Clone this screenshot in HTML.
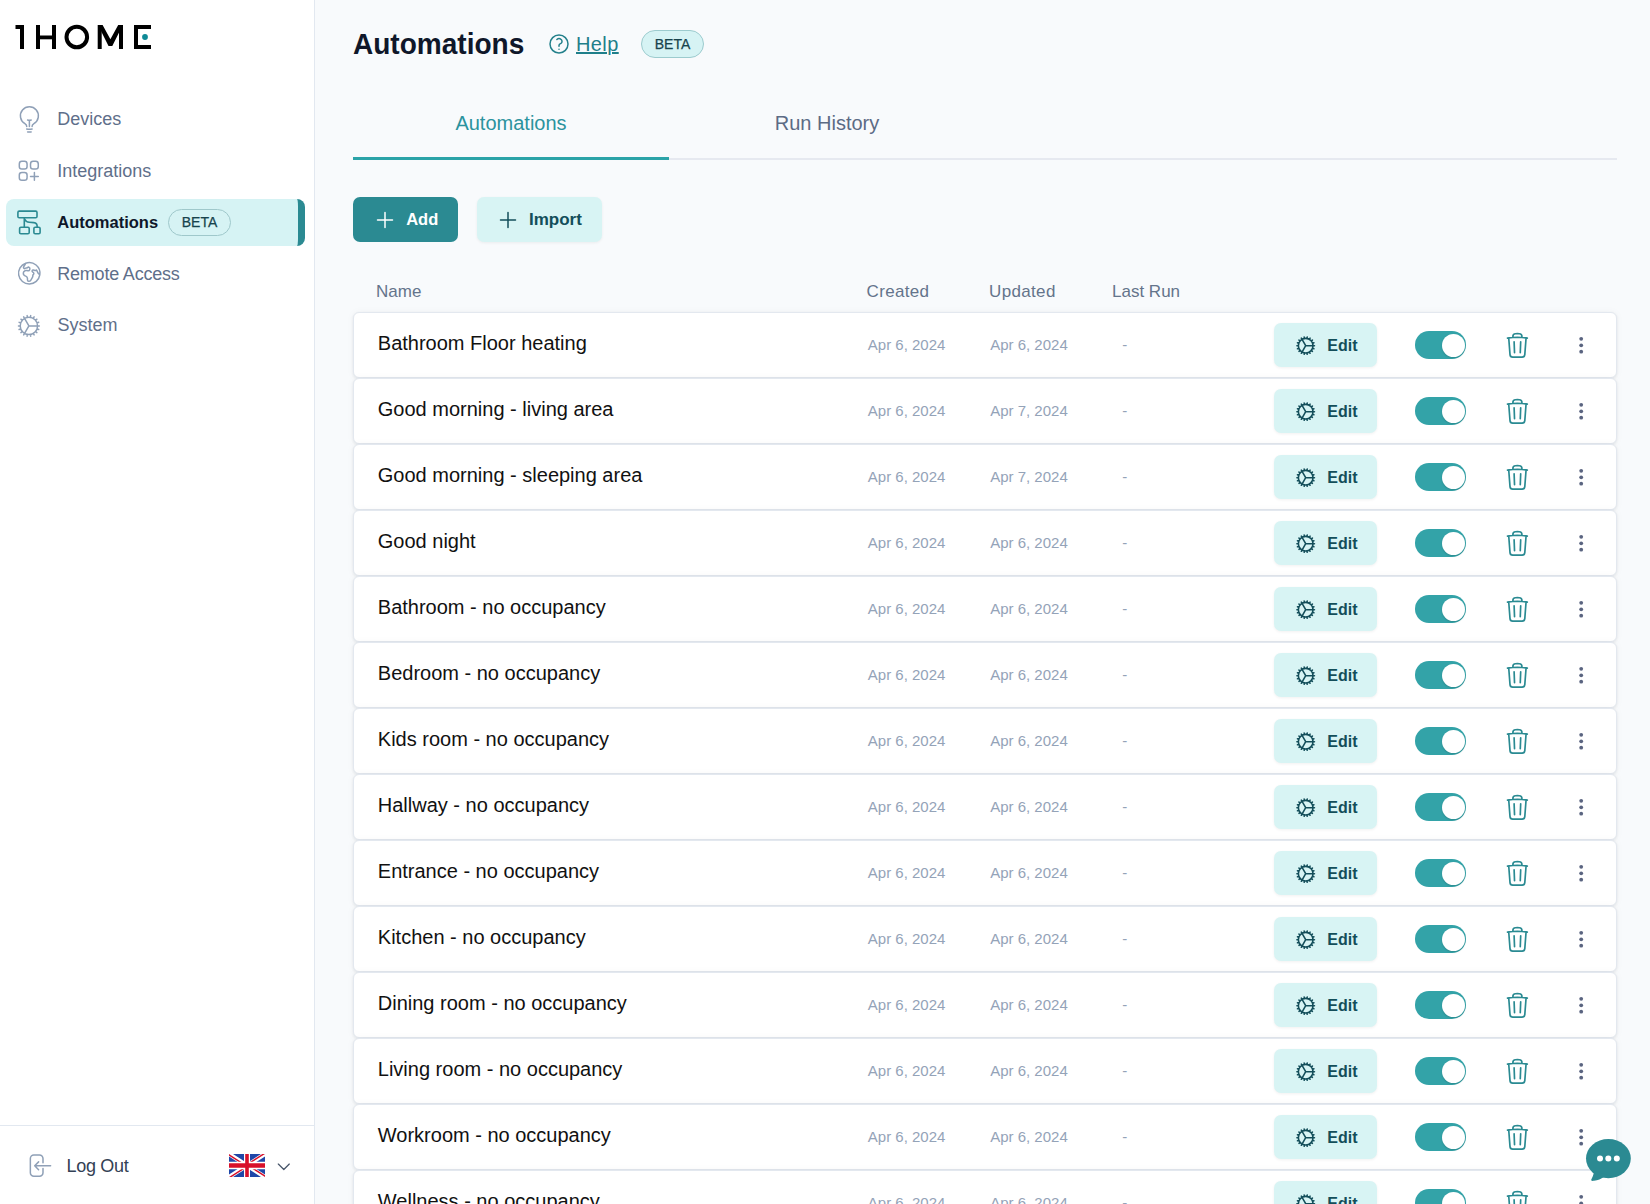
<!DOCTYPE html>
<html><head><meta charset="utf-8"><title>Automations</title>
<style>
html,body{margin:0;padding:0;width:1650px;height:1204px;overflow:hidden;background:#f8fafc;font-family:"Liberation Sans", sans-serif;}
.t{position:absolute;white-space:nowrap;}
.i{position:absolute;overflow:visible;}
.b{position:absolute;box-sizing:border-box;}
</style></head><body>
<div class="b" style="left:0;top:0;width:315px;height:1204px;background:#fff;border-right:1px solid #e2e8f0"></div>
<svg class="i" style="left:0;top:0;width:200px;height:70px" viewBox="0 0 200 70">
<g fill="#000">
<path d="M15.5 25h8.5v24h-4v-20h-4.5z"/>
<rect x="36" y="25" width="4" height="24"/><rect x="52" y="25" width="4" height="24"/><rect x="36" y="35.5" width="20" height="3.8"/>
<rect x="97.7" y="25" width="4" height="24"/><rect x="119" y="25" width="4" height="24"/>
<path d="M98 25h4.6l7.8 14.2 7.8-14.2h4.6l-10.5 20.9h-3.8z"/>
<path d="M134 25h17v4h-13v16h13v4h-17z"/>
</g>
<circle cx="76.8" cy="37" r="10.3" fill="none" stroke="#000" stroke-width="4"/>
<circle cx="145" cy="37" r="2.9" fill="#0e8a96"/>
</svg>
<svg class="i" style="left:14.75px;top:104.80px;width:28.80px;height:28.80px;" viewBox="0 0 24 24" fill="none" stroke="#8fa0b7" stroke-width="1.25" stroke-linecap="round" stroke-linejoin="round"><path d="M12 18v-5.25m0 0a6.01 6.01 0 0 0 1.5-.189m-1.5.189a6.01 6.01 0 0 1-1.5-.189m3.75 7.478a12.06 12.06 0 0 1-4.5 0m3.75 2.383a14.406 14.406 0 0 1-3 0M14.25 18v-.192c0-.983.658-1.823 1.508-2.316a7.5 7.5 0 1 0-7.517 0c.85.493 1.509 1.333 1.509 2.316V18"/></svg>
<svg class="i" style="left:15.10px;top:156.50px;width:27.60px;height:27.60px;" viewBox="0 0 24 24" fill="none" stroke="#8fa0b7" stroke-width="1.3" stroke-linecap="round" stroke-linejoin="round"><path d="M13.5 16.875h3.375m0 0h3.375m-3.375 0V13.5m0 3.375v3.375M6 10.5h2.25a2.25 2.25 0 0 0 2.25-2.25V6a2.25 2.25 0 0 0-2.25-2.25H6A2.25 2.25 0 0 0 3.75 6v2.25A2.25 2.25 0 0 0 6 10.5Zm0 9.75h2.25A2.25 2.25 0 0 0 10.5 18v-2.25a2.25 2.25 0 0 0-2.25-2.25H6a2.25 2.25 0 0 0-2.25 2.25V18A2.25 2.25 0 0 0 6 20.25Zm9.75-9.75H18a2.25 2.25 0 0 0 2.25-2.25V6A2.25 2.25 0 0 0 18 3.75h-2.25A2.25 2.25 0 0 0 13.5 6v2.25a2.25 2.25 0 0 0 2.25 2.25Z"/></svg>
<div class="b" style="left:6px;top:199px;width:299px;height:47px;background:#d6f3f4;border-radius:8px;border-right:7px solid #2b8a92"></div>
<svg class="i" style="left:0;top:190px;width:60px;height:60px" viewBox="0 190 60 60" fill="none" stroke="#2b8a92" stroke-width="1.6" stroke-linecap="round" stroke-linejoin="round">
<rect x="17.9" y="211.1" width="19.1" height="6.6" rx="1.3"/>
<rect x="19.6" y="227.3" width="9.6" height="6.5" rx="1.3"/>
<rect x="33.9" y="227.3" width="6.2" height="6.5" rx="1.3"/>
<path d="M24.3 218v9.2M24.6 219c1 2.2 2.2 3.1 4.6 3.3l4.6.3c2.3.2 3.6 1.5 3.4 4.7"/>
</svg>
<svg class="i" style="left:14.90px;top:259.20px;width:28.50px;height:28.50px;" viewBox="0 0 24 24" fill="none" stroke="#8fa0b7" stroke-width="1.25" stroke-linecap="round" stroke-linejoin="round"><path d="m20.893 13.393-1.135-1.135a2.252 2.252 0 0 1-.421-.585l-1.08-2.16a.414.414 0 0 0-.663-.107.827.827 0 0 1-.812.21l-1.273-.363a.89.89 0 0 0-.738 1.595l.587.39c.59.395.674 1.23.172 1.732l-.2.2c-.212.212-.33.498-.33.796v.41c0 .409-.11.809-.32 1.158l-1.315 2.191a2.11 2.11 0 0 1-1.81 1.025 1.055 1.055 0 0 1-1.055-1.055v-1.172c0-.92-.56-1.747-1.414-2.089l-.655-.261a2.25 2.25 0 0 1-1.383-2.46l.007-.042a2.25 2.25 0 0 1 .29-.787l.09-.15a2.25 2.25 0 0 1 2.37-1.048l1.178.236a1.125 1.125 0 0 0 1.302-.795l.208-.73a1.125 1.125 0 0 0-.578-1.315l-.665-.332-.091.091a2.25 2.25 0 0 1-1.591.659h-.18c-.249 0-.487.1-.662.274a.931.931 0 0 1-1.458-1.137l1.411-2.353a2.25 2.25 0 0 0 .286-.76m11.928 9.869A9 9 0 0 0 8.965 3.525m11.928 9.868A9 9 0 1 1 8.965 3.525"/></svg>
<svg class="i" style="left:15.00px;top:311.80px;width:27.80px;height:27.80px;" viewBox="0 0 24 24" fill="none" stroke="#8fa0b7" stroke-width="1.3" stroke-linecap="round" stroke-linejoin="round"><path d="M4.5 12a7.5 7.5 0 0 0 15 0m-15 0a7.5 7.5 0 1 1 15 0m-15 0H3m16.5 0H21m-1.5 0H12m-8.457 3.077 1.41-.513m14.095-5.13 1.41-.513M5.106 17.785l1.149-.964m11.49-9.642 1.149-.964M7.501 19.795l.75-1.3m7.5-12.99.75-1.3m-6.063 16.658.26-1.477m2.605-14.772.26-1.477m0 17.726-.26-1.477M10.698 4.614l-.26-1.477M16.5 19.794l-.75-1.299M7.5 4.205 12 12m6.894 5.785-1.149-.964M6.256 7.178l-1.15-.964m15.352 8.864-1.41-.513M4.954 9.435l-1.41-.514M12.002 12l-3.75 6.495"/></svg>
<div class="t" style="left:57.2px;top:109.5px;font-size:18px;line-height:18px;font-weight:400;color:#5f6f8a;">Devices</div>
<div class="t" style="left:57.2px;top:161.6px;font-size:18px;line-height:18px;font-weight:400;color:#5f6f8a;">Integrations</div>
<div class="t" style="left:57.3px;top:213.8px;font-size:16.5px;line-height:16.5px;font-weight:700;color:#0f172a;">Automations</div>
<div class="b" style="left:168px;top:209px;width:63px;height:27px;border:1.5px solid #9fc8cb;border-radius:14px"></div>
<div class="t" style="left:168.0px;width:63px;text-align:center;top:215.3px;font-size:14px;line-height:14px;font-weight:400;color:#17434d;-webkit-text-stroke:0.25px #17434d;">BETA</div>
<div class="t" style="left:57.2px;top:264.5px;font-size:18px;line-height:18px;font-weight:400;color:#5f6f8a;letter-spacing:-0.2px;">Remote Access</div>
<div class="t" style="left:57.5px;top:316.3px;font-size:18px;line-height:18px;font-weight:400;color:#5f6f8a;">System</div>
<div class="b" style="left:0;top:1125px;width:314px;height:1px;background:#e2e8f0"></div>
<svg class="i" style="left:0;top:1140px;width:60px;height:50px" viewBox="0 1140 60 50" fill="none" stroke="#8fa0b7" stroke-width="1.5" stroke-linecap="round" stroke-linejoin="round">
<path d="M43 1162.8V1158.5A3.5 3.5 0 0 0 39.5 1155H33.85A3.5 3.5 0 0 0 30.35 1158.5V1172.8A3.5 3.5 0 0 0 33.85 1176.3H39.5A3.5 3.5 0 0 0 43 1172.8V1168.6"/>
<path d="M50.6 1165.8H35M38.6 1161.9L34.7 1165.8L38.6 1169.8"/>
</svg>
<div class="t" style="left:66.5px;top:1156.8px;font-size:18px;line-height:18px;font-weight:400;color:#334155;letter-spacing:-0.3px;">Log Out</div>
<svg class="i" style="left:229px;top:1154px;width:36px;height:23px" viewBox="0 0 60 30" preserveAspectRatio="none">
<clipPath id="fc"><path d="M0,0 v30 h60 v-30 z"/></clipPath>
<clipPath id="ft"><path d="M30,15 h30 v15 z v15 h-30 z h-30 v-15 z v-15 h30 z"/></clipPath>
<g clip-path="url(#fc)">
<path d="M0,0 v30 h60 v-30 z" fill="#1f47a8"/>
<path d="M0,0 L60,30 M60,0 L0,30" stroke="#fff" stroke-width="6"/>
<path d="M0,0 L60,30 M60,0 L0,30" clip-path="url(#ft)" stroke="#d8102a" stroke-width="4"/>
<path d="M30,0 v30 M0,15 h60" stroke="#fff" stroke-width="10"/>
<path d="M30,0 v30 M0,15 h60" stroke="#d8102a" stroke-width="6"/>
</g></svg>
<svg class="i" style="left:275.20px;top:1158.00px;width:17.60px;height:17.60px;" viewBox="0 0 24 24" fill="none" stroke="#475569" stroke-width="1.7" stroke-linecap="round" stroke-linejoin="round"><path d="m19.5 8.25-7.5 7.5-7.5-7.5"/></svg>
<div class="t" style="left:352.6px;top:29.2px;font-size:29.7px;line-height:29.7px;font-weight:700;color:#0f172a;transform:scaleX(0.944);transform-origin:0 0;">Automations</div>
<svg class="i" style="left:547.20px;top:31.60px;width:24.00px;height:24.00px;" viewBox="0 0 24 24" fill="none" stroke="#23808b" stroke-width="1.5" stroke-linecap="round" stroke-linejoin="round"><path d="M9.879 7.519c1.171-1.025 3.071-1.025 4.242 0 1.172 1.025 1.172 2.687 0 3.712-.203.179-.43.326-.67.442-.745.361-1.45.999-1.45 1.827v.75M21 12a9 9 0 1 1-18 0 9 9 0 0 1 18 0Zm-9 5.25h.008v.008H12v-.008Z"/></svg>
<div class="t" style="left:576.0px;top:33.9px;font-size:20px;line-height:20px;font-weight:400;color:#1f7f8a;letter-spacing:0.4px;text-decoration:underline;text-decoration-thickness:2px;text-underline-offset:1px;">Help</div>
<div class="b" style="left:641px;top:30px;width:63px;height:28px;background:#d6f3f4;border:1.5px solid #9ccbce;border-radius:14px"></div>
<div class="t" style="left:641.0px;width:63px;text-align:center;top:37.0px;font-size:14px;line-height:14px;font-weight:400;color:#17434d;-webkit-text-stroke:0.25px #17434d;">BETA</div>
<div class="t" style="left:353.0px;width:316px;text-align:center;top:113.2px;font-size:20px;line-height:20px;font-weight:400;color:#2b939e;">Automations</div>
<div class="t" style="left:669.0px;width:316px;text-align:center;top:113.2px;font-size:20px;line-height:20px;font-weight:400;color:#5c6b85;">Run History</div>
<div class="b" style="left:669px;top:158px;width:948px;height:2px;background:#e6e9f0"></div>
<div class="b" style="left:353px;top:157px;width:316px;height:3px;background:#2ba3a8"></div>
<div class="b" style="left:353px;top:197px;width:105px;height:45px;background:#2b8a92;border-radius:7px"></div>
<svg class="i" style="left:372.60px;top:207.80px;width:24.00px;height:24.00px;" viewBox="0 0 24 24" fill="none" stroke="#ffffff" stroke-width="1.5" stroke-linecap="round" stroke-linejoin="round"><path d="M12 4.5v15m7.5-7.5h-15"/></svg>
<div class="t" style="left:406.2px;top:211.1px;font-size:16.5px;line-height:16.5px;font-weight:700;color:#ffffff;">Add</div>
<div class="b" style="left:477px;top:197px;width:125px;height:45px;background:#d8f4f4;border-radius:7px;box-shadow:0 1px 3px rgba(0,0,0,0.06)"></div>
<svg class="i" style="left:496.25px;top:207.80px;width:24.00px;height:24.00px;" viewBox="0 0 24 24" fill="none" stroke="#134e5a" stroke-width="1.5" stroke-linecap="round" stroke-linejoin="round"><path d="M12 4.5v15m7.5-7.5h-15"/></svg>
<div class="t" style="left:529.0px;top:210.7px;font-size:17px;line-height:17px;font-weight:700;color:#134e5a;">Import</div>
<div class="t" style="left:376.0px;top:282.5px;font-size:17px;line-height:17px;font-weight:400;color:#64748b;">Name</div>
<div class="t" style="left:866.5px;top:283.0px;font-size:17px;line-height:17px;font-weight:400;color:#64748b;letter-spacing:0.35px;">Created</div>
<div class="t" style="left:989.0px;top:283.0px;font-size:17px;line-height:17px;font-weight:400;color:#64748b;letter-spacing:0.35px;">Updated</div>
<div class="t" style="left:1112.0px;top:283.0px;font-size:17px;line-height:17px;font-weight:400;color:#64748b;">Last Run</div>
<div class="b" style="left:353px;top:312px;width:1264px;height:66px;background:#fff;border:1px solid #e3e8ef;border-radius:6px;box-shadow:0 1px 3px rgba(15,23,42,0.08),0 0 8px rgba(15,23,42,0.035)"></div>
<div class="t" style="left:377.8px;top:332.5px;font-size:20px;line-height:20px;font-weight:400;color:#111111;">Bathroom Floor heating</div>
<div class="t" style="left:867.8px;top:336.8px;font-size:15px;line-height:15px;font-weight:400;color:#94a3b8;">Apr 6, 2024</div>
<div class="t" style="left:990.2px;top:336.8px;font-size:15px;line-height:15px;font-weight:400;color:#94a3b8;">Apr 6, 2024</div>
<div class="t" style="left:1122.3px;top:336.8px;font-size:15px;line-height:15px;font-weight:400;color:#94a3b8;">-</div>
<div class="b" style="left:1274px;top:323px;width:103px;height:44px;background:#d8f4f4;border-radius:7px;box-shadow:0 1px 3px rgba(0,0,0,0.06)"></div>
<svg class="i" style="left:1294.30px;top:333.50px;width:23.40px;height:23.40px;" viewBox="0 0 24 24" fill="none" stroke="#134e5a" stroke-width="1.6" stroke-linecap="round" stroke-linejoin="round"><path d="M4.5 12a7.5 7.5 0 0 0 15 0m-15 0a7.5 7.5 0 1 1 15 0m-15 0H3m16.5 0H21m-1.5 0H12m-8.457 3.077 1.41-.513m14.095-5.13 1.41-.513M5.106 17.785l1.149-.964m11.49-9.642 1.149-.964M7.501 19.795l.75-1.3m7.5-12.99.75-1.3m-6.063 16.658.26-1.477m2.605-14.772.26-1.477m0 17.726-.26-1.477M10.698 4.614l-.26-1.477M16.5 19.794l-.75-1.299M7.5 4.205 12 12m6.894 5.785-1.149-.964M6.256 7.178l-1.15-.964m15.352 8.864-1.41-.513M4.954 9.435l-1.41-.514M12.002 12l-3.75 6.495"/></svg>
<div class="t" style="left:1327.3px;top:337.9px;font-size:16px;line-height:16px;font-weight:700;color:#134e5a;">Edit</div>
<div class="b" style="left:1415px;top:331px;width:51px;height:28px;background:#33a3a8;border-radius:14px"></div>
<div class="b" style="left:1441.5px;top:334px;width:23px;height:23px;background:#fff;border-radius:50%;box-shadow:0 1px 2px rgba(0,0,0,0.15)"></div>
<svg class="i" style="left:1503.30px;top:331.00px;width:28.80px;height:28.80px;" viewBox="0 0 24 24" fill="none" stroke="#2a8a92" stroke-width="1.4" stroke-linecap="round" stroke-linejoin="round"><path d="m14.74 9-.346 9m-4.788 0L9.26 9m9.968-3.21c.342.052.682.107 1.022.166m-1.022-.165L18.16 19.673a2.25 2.25 0 0 1-2.244 2.077H8.084a2.25 2.25 0 0 1-2.244-2.077L4.772 5.79m14.456 0a48.108 48.108 0 0 0-3.478-.397m-12 .562c.34-.059.68-.114 1.022-.165m0 0a48.11 48.11 0 0 1 3.478-.397m7.5 0v-.916c0-1.18-.91-2.164-2.09-2.201a51.964 51.964 0 0 0-3.32 0c-1.18.037-2.09 1.022-2.09 2.201v.916m7.5 0a48.667 48.667 0 0 0-7.5 0"/></svg>
<svg class="i" style="left:1570px;top:312px;width:24px;height:66px" viewBox="1570 0 24 66"><g fill="#5a6480"><circle cx="1581.2" cy="26.85" r="1.9"/><circle cx="1581.2" cy="33.3" r="1.9"/><circle cx="1581.2" cy="39.7" r="1.9"/></g></svg>
<div class="b" style="left:353px;top:378px;width:1264px;height:66px;background:#fff;border:1px solid #e3e8ef;border-radius:6px;box-shadow:0 1px 3px rgba(15,23,42,0.08),0 0 8px rgba(15,23,42,0.035)"></div>
<div class="t" style="left:377.8px;top:398.5px;font-size:20px;line-height:20px;font-weight:400;color:#111111;">Good morning - living area</div>
<div class="t" style="left:867.8px;top:402.8px;font-size:15px;line-height:15px;font-weight:400;color:#94a3b8;">Apr 6, 2024</div>
<div class="t" style="left:990.2px;top:402.8px;font-size:15px;line-height:15px;font-weight:400;color:#94a3b8;">Apr 7, 2024</div>
<div class="t" style="left:1122.3px;top:402.8px;font-size:15px;line-height:15px;font-weight:400;color:#94a3b8;">-</div>
<div class="b" style="left:1274px;top:389px;width:103px;height:44px;background:#d8f4f4;border-radius:7px;box-shadow:0 1px 3px rgba(0,0,0,0.06)"></div>
<svg class="i" style="left:1294.30px;top:399.50px;width:23.40px;height:23.40px;" viewBox="0 0 24 24" fill="none" stroke="#134e5a" stroke-width="1.6" stroke-linecap="round" stroke-linejoin="round"><path d="M4.5 12a7.5 7.5 0 0 0 15 0m-15 0a7.5 7.5 0 1 1 15 0m-15 0H3m16.5 0H21m-1.5 0H12m-8.457 3.077 1.41-.513m14.095-5.13 1.41-.513M5.106 17.785l1.149-.964m11.49-9.642 1.149-.964M7.501 19.795l.75-1.3m7.5-12.99.75-1.3m-6.063 16.658.26-1.477m2.605-14.772.26-1.477m0 17.726-.26-1.477M10.698 4.614l-.26-1.477M16.5 19.794l-.75-1.299M7.5 4.205 12 12m6.894 5.785-1.149-.964M6.256 7.178l-1.15-.964m15.352 8.864-1.41-.513M4.954 9.435l-1.41-.514M12.002 12l-3.75 6.495"/></svg>
<div class="t" style="left:1327.3px;top:403.9px;font-size:16px;line-height:16px;font-weight:700;color:#134e5a;">Edit</div>
<div class="b" style="left:1415px;top:397px;width:51px;height:28px;background:#33a3a8;border-radius:14px"></div>
<div class="b" style="left:1441.5px;top:400px;width:23px;height:23px;background:#fff;border-radius:50%;box-shadow:0 1px 2px rgba(0,0,0,0.15)"></div>
<svg class="i" style="left:1503.30px;top:397.00px;width:28.80px;height:28.80px;" viewBox="0 0 24 24" fill="none" stroke="#2a8a92" stroke-width="1.4" stroke-linecap="round" stroke-linejoin="round"><path d="m14.74 9-.346 9m-4.788 0L9.26 9m9.968-3.21c.342.052.682.107 1.022.166m-1.022-.165L18.16 19.673a2.25 2.25 0 0 1-2.244 2.077H8.084a2.25 2.25 0 0 1-2.244-2.077L4.772 5.79m14.456 0a48.108 48.108 0 0 0-3.478-.397m-12 .562c.34-.059.68-.114 1.022-.165m0 0a48.11 48.11 0 0 1 3.478-.397m7.5 0v-.916c0-1.18-.91-2.164-2.09-2.201a51.964 51.964 0 0 0-3.32 0c-1.18.037-2.09 1.022-2.09 2.201v.916m7.5 0a48.667 48.667 0 0 0-7.5 0"/></svg>
<svg class="i" style="left:1570px;top:378px;width:24px;height:66px" viewBox="1570 0 24 66"><g fill="#5a6480"><circle cx="1581.2" cy="26.85" r="1.9"/><circle cx="1581.2" cy="33.3" r="1.9"/><circle cx="1581.2" cy="39.7" r="1.9"/></g></svg>
<div class="b" style="left:353px;top:444px;width:1264px;height:66px;background:#fff;border:1px solid #e3e8ef;border-radius:6px;box-shadow:0 1px 3px rgba(15,23,42,0.08),0 0 8px rgba(15,23,42,0.035)"></div>
<div class="t" style="left:377.8px;top:464.5px;font-size:20px;line-height:20px;font-weight:400;color:#111111;">Good morning - sleeping area</div>
<div class="t" style="left:867.8px;top:468.8px;font-size:15px;line-height:15px;font-weight:400;color:#94a3b8;">Apr 6, 2024</div>
<div class="t" style="left:990.2px;top:468.8px;font-size:15px;line-height:15px;font-weight:400;color:#94a3b8;">Apr 7, 2024</div>
<div class="t" style="left:1122.3px;top:468.8px;font-size:15px;line-height:15px;font-weight:400;color:#94a3b8;">-</div>
<div class="b" style="left:1274px;top:455px;width:103px;height:44px;background:#d8f4f4;border-radius:7px;box-shadow:0 1px 3px rgba(0,0,0,0.06)"></div>
<svg class="i" style="left:1294.30px;top:465.50px;width:23.40px;height:23.40px;" viewBox="0 0 24 24" fill="none" stroke="#134e5a" stroke-width="1.6" stroke-linecap="round" stroke-linejoin="round"><path d="M4.5 12a7.5 7.5 0 0 0 15 0m-15 0a7.5 7.5 0 1 1 15 0m-15 0H3m16.5 0H21m-1.5 0H12m-8.457 3.077 1.41-.513m14.095-5.13 1.41-.513M5.106 17.785l1.149-.964m11.49-9.642 1.149-.964M7.501 19.795l.75-1.3m7.5-12.99.75-1.3m-6.063 16.658.26-1.477m2.605-14.772.26-1.477m0 17.726-.26-1.477M10.698 4.614l-.26-1.477M16.5 19.794l-.75-1.299M7.5 4.205 12 12m6.894 5.785-1.149-.964M6.256 7.178l-1.15-.964m15.352 8.864-1.41-.513M4.954 9.435l-1.41-.514M12.002 12l-3.75 6.495"/></svg>
<div class="t" style="left:1327.3px;top:469.9px;font-size:16px;line-height:16px;font-weight:700;color:#134e5a;">Edit</div>
<div class="b" style="left:1415px;top:463px;width:51px;height:28px;background:#33a3a8;border-radius:14px"></div>
<div class="b" style="left:1441.5px;top:466px;width:23px;height:23px;background:#fff;border-radius:50%;box-shadow:0 1px 2px rgba(0,0,0,0.15)"></div>
<svg class="i" style="left:1503.30px;top:463.00px;width:28.80px;height:28.80px;" viewBox="0 0 24 24" fill="none" stroke="#2a8a92" stroke-width="1.4" stroke-linecap="round" stroke-linejoin="round"><path d="m14.74 9-.346 9m-4.788 0L9.26 9m9.968-3.21c.342.052.682.107 1.022.166m-1.022-.165L18.16 19.673a2.25 2.25 0 0 1-2.244 2.077H8.084a2.25 2.25 0 0 1-2.244-2.077L4.772 5.79m14.456 0a48.108 48.108 0 0 0-3.478-.397m-12 .562c.34-.059.68-.114 1.022-.165m0 0a48.11 48.11 0 0 1 3.478-.397m7.5 0v-.916c0-1.18-.91-2.164-2.09-2.201a51.964 51.964 0 0 0-3.32 0c-1.18.037-2.09 1.022-2.09 2.201v.916m7.5 0a48.667 48.667 0 0 0-7.5 0"/></svg>
<svg class="i" style="left:1570px;top:444px;width:24px;height:66px" viewBox="1570 0 24 66"><g fill="#5a6480"><circle cx="1581.2" cy="26.85" r="1.9"/><circle cx="1581.2" cy="33.3" r="1.9"/><circle cx="1581.2" cy="39.7" r="1.9"/></g></svg>
<div class="b" style="left:353px;top:510px;width:1264px;height:66px;background:#fff;border:1px solid #e3e8ef;border-radius:6px;box-shadow:0 1px 3px rgba(15,23,42,0.08),0 0 8px rgba(15,23,42,0.035)"></div>
<div class="t" style="left:377.8px;top:530.5px;font-size:20px;line-height:20px;font-weight:400;color:#111111;">Good night</div>
<div class="t" style="left:867.8px;top:534.8px;font-size:15px;line-height:15px;font-weight:400;color:#94a3b8;">Apr 6, 2024</div>
<div class="t" style="left:990.2px;top:534.8px;font-size:15px;line-height:15px;font-weight:400;color:#94a3b8;">Apr 6, 2024</div>
<div class="t" style="left:1122.3px;top:534.8px;font-size:15px;line-height:15px;font-weight:400;color:#94a3b8;">-</div>
<div class="b" style="left:1274px;top:521px;width:103px;height:44px;background:#d8f4f4;border-radius:7px;box-shadow:0 1px 3px rgba(0,0,0,0.06)"></div>
<svg class="i" style="left:1294.30px;top:531.50px;width:23.40px;height:23.40px;" viewBox="0 0 24 24" fill="none" stroke="#134e5a" stroke-width="1.6" stroke-linecap="round" stroke-linejoin="round"><path d="M4.5 12a7.5 7.5 0 0 0 15 0m-15 0a7.5 7.5 0 1 1 15 0m-15 0H3m16.5 0H21m-1.5 0H12m-8.457 3.077 1.41-.513m14.095-5.13 1.41-.513M5.106 17.785l1.149-.964m11.49-9.642 1.149-.964M7.501 19.795l.75-1.3m7.5-12.99.75-1.3m-6.063 16.658.26-1.477m2.605-14.772.26-1.477m0 17.726-.26-1.477M10.698 4.614l-.26-1.477M16.5 19.794l-.75-1.299M7.5 4.205 12 12m6.894 5.785-1.149-.964M6.256 7.178l-1.15-.964m15.352 8.864-1.41-.513M4.954 9.435l-1.41-.514M12.002 12l-3.75 6.495"/></svg>
<div class="t" style="left:1327.3px;top:535.9px;font-size:16px;line-height:16px;font-weight:700;color:#134e5a;">Edit</div>
<div class="b" style="left:1415px;top:529px;width:51px;height:28px;background:#33a3a8;border-radius:14px"></div>
<div class="b" style="left:1441.5px;top:532px;width:23px;height:23px;background:#fff;border-radius:50%;box-shadow:0 1px 2px rgba(0,0,0,0.15)"></div>
<svg class="i" style="left:1503.30px;top:529.00px;width:28.80px;height:28.80px;" viewBox="0 0 24 24" fill="none" stroke="#2a8a92" stroke-width="1.4" stroke-linecap="round" stroke-linejoin="round"><path d="m14.74 9-.346 9m-4.788 0L9.26 9m9.968-3.21c.342.052.682.107 1.022.166m-1.022-.165L18.16 19.673a2.25 2.25 0 0 1-2.244 2.077H8.084a2.25 2.25 0 0 1-2.244-2.077L4.772 5.79m14.456 0a48.108 48.108 0 0 0-3.478-.397m-12 .562c.34-.059.68-.114 1.022-.165m0 0a48.11 48.11 0 0 1 3.478-.397m7.5 0v-.916c0-1.18-.91-2.164-2.09-2.201a51.964 51.964 0 0 0-3.32 0c-1.18.037-2.09 1.022-2.09 2.201v.916m7.5 0a48.667 48.667 0 0 0-7.5 0"/></svg>
<svg class="i" style="left:1570px;top:510px;width:24px;height:66px" viewBox="1570 0 24 66"><g fill="#5a6480"><circle cx="1581.2" cy="26.85" r="1.9"/><circle cx="1581.2" cy="33.3" r="1.9"/><circle cx="1581.2" cy="39.7" r="1.9"/></g></svg>
<div class="b" style="left:353px;top:576px;width:1264px;height:66px;background:#fff;border:1px solid #e3e8ef;border-radius:6px;box-shadow:0 1px 3px rgba(15,23,42,0.08),0 0 8px rgba(15,23,42,0.035)"></div>
<div class="t" style="left:377.8px;top:596.5px;font-size:20px;line-height:20px;font-weight:400;color:#111111;">Bathroom - no occupancy</div>
<div class="t" style="left:867.8px;top:600.8px;font-size:15px;line-height:15px;font-weight:400;color:#94a3b8;">Apr 6, 2024</div>
<div class="t" style="left:990.2px;top:600.8px;font-size:15px;line-height:15px;font-weight:400;color:#94a3b8;">Apr 6, 2024</div>
<div class="t" style="left:1122.3px;top:600.8px;font-size:15px;line-height:15px;font-weight:400;color:#94a3b8;">-</div>
<div class="b" style="left:1274px;top:587px;width:103px;height:44px;background:#d8f4f4;border-radius:7px;box-shadow:0 1px 3px rgba(0,0,0,0.06)"></div>
<svg class="i" style="left:1294.30px;top:597.50px;width:23.40px;height:23.40px;" viewBox="0 0 24 24" fill="none" stroke="#134e5a" stroke-width="1.6" stroke-linecap="round" stroke-linejoin="round"><path d="M4.5 12a7.5 7.5 0 0 0 15 0m-15 0a7.5 7.5 0 1 1 15 0m-15 0H3m16.5 0H21m-1.5 0H12m-8.457 3.077 1.41-.513m14.095-5.13 1.41-.513M5.106 17.785l1.149-.964m11.49-9.642 1.149-.964M7.501 19.795l.75-1.3m7.5-12.99.75-1.3m-6.063 16.658.26-1.477m2.605-14.772.26-1.477m0 17.726-.26-1.477M10.698 4.614l-.26-1.477M16.5 19.794l-.75-1.299M7.5 4.205 12 12m6.894 5.785-1.149-.964M6.256 7.178l-1.15-.964m15.352 8.864-1.41-.513M4.954 9.435l-1.41-.514M12.002 12l-3.75 6.495"/></svg>
<div class="t" style="left:1327.3px;top:601.9px;font-size:16px;line-height:16px;font-weight:700;color:#134e5a;">Edit</div>
<div class="b" style="left:1415px;top:595px;width:51px;height:28px;background:#33a3a8;border-radius:14px"></div>
<div class="b" style="left:1441.5px;top:598px;width:23px;height:23px;background:#fff;border-radius:50%;box-shadow:0 1px 2px rgba(0,0,0,0.15)"></div>
<svg class="i" style="left:1503.30px;top:595.00px;width:28.80px;height:28.80px;" viewBox="0 0 24 24" fill="none" stroke="#2a8a92" stroke-width="1.4" stroke-linecap="round" stroke-linejoin="round"><path d="m14.74 9-.346 9m-4.788 0L9.26 9m9.968-3.21c.342.052.682.107 1.022.166m-1.022-.165L18.16 19.673a2.25 2.25 0 0 1-2.244 2.077H8.084a2.25 2.25 0 0 1-2.244-2.077L4.772 5.79m14.456 0a48.108 48.108 0 0 0-3.478-.397m-12 .562c.34-.059.68-.114 1.022-.165m0 0a48.11 48.11 0 0 1 3.478-.397m7.5 0v-.916c0-1.18-.91-2.164-2.09-2.201a51.964 51.964 0 0 0-3.32 0c-1.18.037-2.09 1.022-2.09 2.201v.916m7.5 0a48.667 48.667 0 0 0-7.5 0"/></svg>
<svg class="i" style="left:1570px;top:576px;width:24px;height:66px" viewBox="1570 0 24 66"><g fill="#5a6480"><circle cx="1581.2" cy="26.85" r="1.9"/><circle cx="1581.2" cy="33.3" r="1.9"/><circle cx="1581.2" cy="39.7" r="1.9"/></g></svg>
<div class="b" style="left:353px;top:642px;width:1264px;height:66px;background:#fff;border:1px solid #e3e8ef;border-radius:6px;box-shadow:0 1px 3px rgba(15,23,42,0.08),0 0 8px rgba(15,23,42,0.035)"></div>
<div class="t" style="left:377.8px;top:662.5px;font-size:20px;line-height:20px;font-weight:400;color:#111111;">Bedroom - no occupancy</div>
<div class="t" style="left:867.8px;top:666.8px;font-size:15px;line-height:15px;font-weight:400;color:#94a3b8;">Apr 6, 2024</div>
<div class="t" style="left:990.2px;top:666.8px;font-size:15px;line-height:15px;font-weight:400;color:#94a3b8;">Apr 6, 2024</div>
<div class="t" style="left:1122.3px;top:666.8px;font-size:15px;line-height:15px;font-weight:400;color:#94a3b8;">-</div>
<div class="b" style="left:1274px;top:653px;width:103px;height:44px;background:#d8f4f4;border-radius:7px;box-shadow:0 1px 3px rgba(0,0,0,0.06)"></div>
<svg class="i" style="left:1294.30px;top:663.50px;width:23.40px;height:23.40px;" viewBox="0 0 24 24" fill="none" stroke="#134e5a" stroke-width="1.6" stroke-linecap="round" stroke-linejoin="round"><path d="M4.5 12a7.5 7.5 0 0 0 15 0m-15 0a7.5 7.5 0 1 1 15 0m-15 0H3m16.5 0H21m-1.5 0H12m-8.457 3.077 1.41-.513m14.095-5.13 1.41-.513M5.106 17.785l1.149-.964m11.49-9.642 1.149-.964M7.501 19.795l.75-1.3m7.5-12.99.75-1.3m-6.063 16.658.26-1.477m2.605-14.772.26-1.477m0 17.726-.26-1.477M10.698 4.614l-.26-1.477M16.5 19.794l-.75-1.299M7.5 4.205 12 12m6.894 5.785-1.149-.964M6.256 7.178l-1.15-.964m15.352 8.864-1.41-.513M4.954 9.435l-1.41-.514M12.002 12l-3.75 6.495"/></svg>
<div class="t" style="left:1327.3px;top:667.9px;font-size:16px;line-height:16px;font-weight:700;color:#134e5a;">Edit</div>
<div class="b" style="left:1415px;top:661px;width:51px;height:28px;background:#33a3a8;border-radius:14px"></div>
<div class="b" style="left:1441.5px;top:664px;width:23px;height:23px;background:#fff;border-radius:50%;box-shadow:0 1px 2px rgba(0,0,0,0.15)"></div>
<svg class="i" style="left:1503.30px;top:661.00px;width:28.80px;height:28.80px;" viewBox="0 0 24 24" fill="none" stroke="#2a8a92" stroke-width="1.4" stroke-linecap="round" stroke-linejoin="round"><path d="m14.74 9-.346 9m-4.788 0L9.26 9m9.968-3.21c.342.052.682.107 1.022.166m-1.022-.165L18.16 19.673a2.25 2.25 0 0 1-2.244 2.077H8.084a2.25 2.25 0 0 1-2.244-2.077L4.772 5.79m14.456 0a48.108 48.108 0 0 0-3.478-.397m-12 .562c.34-.059.68-.114 1.022-.165m0 0a48.11 48.11 0 0 1 3.478-.397m7.5 0v-.916c0-1.18-.91-2.164-2.09-2.201a51.964 51.964 0 0 0-3.32 0c-1.18.037-2.09 1.022-2.09 2.201v.916m7.5 0a48.667 48.667 0 0 0-7.5 0"/></svg>
<svg class="i" style="left:1570px;top:642px;width:24px;height:66px" viewBox="1570 0 24 66"><g fill="#5a6480"><circle cx="1581.2" cy="26.85" r="1.9"/><circle cx="1581.2" cy="33.3" r="1.9"/><circle cx="1581.2" cy="39.7" r="1.9"/></g></svg>
<div class="b" style="left:353px;top:708px;width:1264px;height:66px;background:#fff;border:1px solid #e3e8ef;border-radius:6px;box-shadow:0 1px 3px rgba(15,23,42,0.08),0 0 8px rgba(15,23,42,0.035)"></div>
<div class="t" style="left:377.8px;top:728.5px;font-size:20px;line-height:20px;font-weight:400;color:#111111;">Kids room - no occupancy</div>
<div class="t" style="left:867.8px;top:732.8px;font-size:15px;line-height:15px;font-weight:400;color:#94a3b8;">Apr 6, 2024</div>
<div class="t" style="left:990.2px;top:732.8px;font-size:15px;line-height:15px;font-weight:400;color:#94a3b8;">Apr 6, 2024</div>
<div class="t" style="left:1122.3px;top:732.8px;font-size:15px;line-height:15px;font-weight:400;color:#94a3b8;">-</div>
<div class="b" style="left:1274px;top:719px;width:103px;height:44px;background:#d8f4f4;border-radius:7px;box-shadow:0 1px 3px rgba(0,0,0,0.06)"></div>
<svg class="i" style="left:1294.30px;top:729.50px;width:23.40px;height:23.40px;" viewBox="0 0 24 24" fill="none" stroke="#134e5a" stroke-width="1.6" stroke-linecap="round" stroke-linejoin="round"><path d="M4.5 12a7.5 7.5 0 0 0 15 0m-15 0a7.5 7.5 0 1 1 15 0m-15 0H3m16.5 0H21m-1.5 0H12m-8.457 3.077 1.41-.513m14.095-5.13 1.41-.513M5.106 17.785l1.149-.964m11.49-9.642 1.149-.964M7.501 19.795l.75-1.3m7.5-12.99.75-1.3m-6.063 16.658.26-1.477m2.605-14.772.26-1.477m0 17.726-.26-1.477M10.698 4.614l-.26-1.477M16.5 19.794l-.75-1.299M7.5 4.205 12 12m6.894 5.785-1.149-.964M6.256 7.178l-1.15-.964m15.352 8.864-1.41-.513M4.954 9.435l-1.41-.514M12.002 12l-3.75 6.495"/></svg>
<div class="t" style="left:1327.3px;top:733.9px;font-size:16px;line-height:16px;font-weight:700;color:#134e5a;">Edit</div>
<div class="b" style="left:1415px;top:727px;width:51px;height:28px;background:#33a3a8;border-radius:14px"></div>
<div class="b" style="left:1441.5px;top:730px;width:23px;height:23px;background:#fff;border-radius:50%;box-shadow:0 1px 2px rgba(0,0,0,0.15)"></div>
<svg class="i" style="left:1503.30px;top:727.00px;width:28.80px;height:28.80px;" viewBox="0 0 24 24" fill="none" stroke="#2a8a92" stroke-width="1.4" stroke-linecap="round" stroke-linejoin="round"><path d="m14.74 9-.346 9m-4.788 0L9.26 9m9.968-3.21c.342.052.682.107 1.022.166m-1.022-.165L18.16 19.673a2.25 2.25 0 0 1-2.244 2.077H8.084a2.25 2.25 0 0 1-2.244-2.077L4.772 5.79m14.456 0a48.108 48.108 0 0 0-3.478-.397m-12 .562c.34-.059.68-.114 1.022-.165m0 0a48.11 48.11 0 0 1 3.478-.397m7.5 0v-.916c0-1.18-.91-2.164-2.09-2.201a51.964 51.964 0 0 0-3.32 0c-1.18.037-2.09 1.022-2.09 2.201v.916m7.5 0a48.667 48.667 0 0 0-7.5 0"/></svg>
<svg class="i" style="left:1570px;top:708px;width:24px;height:66px" viewBox="1570 0 24 66"><g fill="#5a6480"><circle cx="1581.2" cy="26.85" r="1.9"/><circle cx="1581.2" cy="33.3" r="1.9"/><circle cx="1581.2" cy="39.7" r="1.9"/></g></svg>
<div class="b" style="left:353px;top:774px;width:1264px;height:66px;background:#fff;border:1px solid #e3e8ef;border-radius:6px;box-shadow:0 1px 3px rgba(15,23,42,0.08),0 0 8px rgba(15,23,42,0.035)"></div>
<div class="t" style="left:377.8px;top:794.5px;font-size:20px;line-height:20px;font-weight:400;color:#111111;">Hallway - no occupancy</div>
<div class="t" style="left:867.8px;top:798.8px;font-size:15px;line-height:15px;font-weight:400;color:#94a3b8;">Apr 6, 2024</div>
<div class="t" style="left:990.2px;top:798.8px;font-size:15px;line-height:15px;font-weight:400;color:#94a3b8;">Apr 6, 2024</div>
<div class="t" style="left:1122.3px;top:798.8px;font-size:15px;line-height:15px;font-weight:400;color:#94a3b8;">-</div>
<div class="b" style="left:1274px;top:785px;width:103px;height:44px;background:#d8f4f4;border-radius:7px;box-shadow:0 1px 3px rgba(0,0,0,0.06)"></div>
<svg class="i" style="left:1294.30px;top:795.50px;width:23.40px;height:23.40px;" viewBox="0 0 24 24" fill="none" stroke="#134e5a" stroke-width="1.6" stroke-linecap="round" stroke-linejoin="round"><path d="M4.5 12a7.5 7.5 0 0 0 15 0m-15 0a7.5 7.5 0 1 1 15 0m-15 0H3m16.5 0H21m-1.5 0H12m-8.457 3.077 1.41-.513m14.095-5.13 1.41-.513M5.106 17.785l1.149-.964m11.49-9.642 1.149-.964M7.501 19.795l.75-1.3m7.5-12.99.75-1.3m-6.063 16.658.26-1.477m2.605-14.772.26-1.477m0 17.726-.26-1.477M10.698 4.614l-.26-1.477M16.5 19.794l-.75-1.299M7.5 4.205 12 12m6.894 5.785-1.149-.964M6.256 7.178l-1.15-.964m15.352 8.864-1.41-.513M4.954 9.435l-1.41-.514M12.002 12l-3.75 6.495"/></svg>
<div class="t" style="left:1327.3px;top:799.9px;font-size:16px;line-height:16px;font-weight:700;color:#134e5a;">Edit</div>
<div class="b" style="left:1415px;top:793px;width:51px;height:28px;background:#33a3a8;border-radius:14px"></div>
<div class="b" style="left:1441.5px;top:796px;width:23px;height:23px;background:#fff;border-radius:50%;box-shadow:0 1px 2px rgba(0,0,0,0.15)"></div>
<svg class="i" style="left:1503.30px;top:793.00px;width:28.80px;height:28.80px;" viewBox="0 0 24 24" fill="none" stroke="#2a8a92" stroke-width="1.4" stroke-linecap="round" stroke-linejoin="round"><path d="m14.74 9-.346 9m-4.788 0L9.26 9m9.968-3.21c.342.052.682.107 1.022.166m-1.022-.165L18.16 19.673a2.25 2.25 0 0 1-2.244 2.077H8.084a2.25 2.25 0 0 1-2.244-2.077L4.772 5.79m14.456 0a48.108 48.108 0 0 0-3.478-.397m-12 .562c.34-.059.68-.114 1.022-.165m0 0a48.11 48.11 0 0 1 3.478-.397m7.5 0v-.916c0-1.18-.91-2.164-2.09-2.201a51.964 51.964 0 0 0-3.32 0c-1.18.037-2.09 1.022-2.09 2.201v.916m7.5 0a48.667 48.667 0 0 0-7.5 0"/></svg>
<svg class="i" style="left:1570px;top:774px;width:24px;height:66px" viewBox="1570 0 24 66"><g fill="#5a6480"><circle cx="1581.2" cy="26.85" r="1.9"/><circle cx="1581.2" cy="33.3" r="1.9"/><circle cx="1581.2" cy="39.7" r="1.9"/></g></svg>
<div class="b" style="left:353px;top:840px;width:1264px;height:66px;background:#fff;border:1px solid #e3e8ef;border-radius:6px;box-shadow:0 1px 3px rgba(15,23,42,0.08),0 0 8px rgba(15,23,42,0.035)"></div>
<div class="t" style="left:377.8px;top:860.5px;font-size:20px;line-height:20px;font-weight:400;color:#111111;">Entrance - no occupancy</div>
<div class="t" style="left:867.8px;top:864.8px;font-size:15px;line-height:15px;font-weight:400;color:#94a3b8;">Apr 6, 2024</div>
<div class="t" style="left:990.2px;top:864.8px;font-size:15px;line-height:15px;font-weight:400;color:#94a3b8;">Apr 6, 2024</div>
<div class="t" style="left:1122.3px;top:864.8px;font-size:15px;line-height:15px;font-weight:400;color:#94a3b8;">-</div>
<div class="b" style="left:1274px;top:851px;width:103px;height:44px;background:#d8f4f4;border-radius:7px;box-shadow:0 1px 3px rgba(0,0,0,0.06)"></div>
<svg class="i" style="left:1294.30px;top:861.50px;width:23.40px;height:23.40px;" viewBox="0 0 24 24" fill="none" stroke="#134e5a" stroke-width="1.6" stroke-linecap="round" stroke-linejoin="round"><path d="M4.5 12a7.5 7.5 0 0 0 15 0m-15 0a7.5 7.5 0 1 1 15 0m-15 0H3m16.5 0H21m-1.5 0H12m-8.457 3.077 1.41-.513m14.095-5.13 1.41-.513M5.106 17.785l1.149-.964m11.49-9.642 1.149-.964M7.501 19.795l.75-1.3m7.5-12.99.75-1.3m-6.063 16.658.26-1.477m2.605-14.772.26-1.477m0 17.726-.26-1.477M10.698 4.614l-.26-1.477M16.5 19.794l-.75-1.299M7.5 4.205 12 12m6.894 5.785-1.149-.964M6.256 7.178l-1.15-.964m15.352 8.864-1.41-.513M4.954 9.435l-1.41-.514M12.002 12l-3.75 6.495"/></svg>
<div class="t" style="left:1327.3px;top:865.9px;font-size:16px;line-height:16px;font-weight:700;color:#134e5a;">Edit</div>
<div class="b" style="left:1415px;top:859px;width:51px;height:28px;background:#33a3a8;border-radius:14px"></div>
<div class="b" style="left:1441.5px;top:862px;width:23px;height:23px;background:#fff;border-radius:50%;box-shadow:0 1px 2px rgba(0,0,0,0.15)"></div>
<svg class="i" style="left:1503.30px;top:859.00px;width:28.80px;height:28.80px;" viewBox="0 0 24 24" fill="none" stroke="#2a8a92" stroke-width="1.4" stroke-linecap="round" stroke-linejoin="round"><path d="m14.74 9-.346 9m-4.788 0L9.26 9m9.968-3.21c.342.052.682.107 1.022.166m-1.022-.165L18.16 19.673a2.25 2.25 0 0 1-2.244 2.077H8.084a2.25 2.25 0 0 1-2.244-2.077L4.772 5.79m14.456 0a48.108 48.108 0 0 0-3.478-.397m-12 .562c.34-.059.68-.114 1.022-.165m0 0a48.11 48.11 0 0 1 3.478-.397m7.5 0v-.916c0-1.18-.91-2.164-2.09-2.201a51.964 51.964 0 0 0-3.32 0c-1.18.037-2.09 1.022-2.09 2.201v.916m7.5 0a48.667 48.667 0 0 0-7.5 0"/></svg>
<svg class="i" style="left:1570px;top:840px;width:24px;height:66px" viewBox="1570 0 24 66"><g fill="#5a6480"><circle cx="1581.2" cy="26.85" r="1.9"/><circle cx="1581.2" cy="33.3" r="1.9"/><circle cx="1581.2" cy="39.7" r="1.9"/></g></svg>
<div class="b" style="left:353px;top:906px;width:1264px;height:66px;background:#fff;border:1px solid #e3e8ef;border-radius:6px;box-shadow:0 1px 3px rgba(15,23,42,0.08),0 0 8px rgba(15,23,42,0.035)"></div>
<div class="t" style="left:377.8px;top:926.5px;font-size:20px;line-height:20px;font-weight:400;color:#111111;">Kitchen - no occupancy</div>
<div class="t" style="left:867.8px;top:930.8px;font-size:15px;line-height:15px;font-weight:400;color:#94a3b8;">Apr 6, 2024</div>
<div class="t" style="left:990.2px;top:930.8px;font-size:15px;line-height:15px;font-weight:400;color:#94a3b8;">Apr 6, 2024</div>
<div class="t" style="left:1122.3px;top:930.8px;font-size:15px;line-height:15px;font-weight:400;color:#94a3b8;">-</div>
<div class="b" style="left:1274px;top:917px;width:103px;height:44px;background:#d8f4f4;border-radius:7px;box-shadow:0 1px 3px rgba(0,0,0,0.06)"></div>
<svg class="i" style="left:1294.30px;top:927.50px;width:23.40px;height:23.40px;" viewBox="0 0 24 24" fill="none" stroke="#134e5a" stroke-width="1.6" stroke-linecap="round" stroke-linejoin="round"><path d="M4.5 12a7.5 7.5 0 0 0 15 0m-15 0a7.5 7.5 0 1 1 15 0m-15 0H3m16.5 0H21m-1.5 0H12m-8.457 3.077 1.41-.513m14.095-5.13 1.41-.513M5.106 17.785l1.149-.964m11.49-9.642 1.149-.964M7.501 19.795l.75-1.3m7.5-12.99.75-1.3m-6.063 16.658.26-1.477m2.605-14.772.26-1.477m0 17.726-.26-1.477M10.698 4.614l-.26-1.477M16.5 19.794l-.75-1.299M7.5 4.205 12 12m6.894 5.785-1.149-.964M6.256 7.178l-1.15-.964m15.352 8.864-1.41-.513M4.954 9.435l-1.41-.514M12.002 12l-3.75 6.495"/></svg>
<div class="t" style="left:1327.3px;top:931.9px;font-size:16px;line-height:16px;font-weight:700;color:#134e5a;">Edit</div>
<div class="b" style="left:1415px;top:925px;width:51px;height:28px;background:#33a3a8;border-radius:14px"></div>
<div class="b" style="left:1441.5px;top:928px;width:23px;height:23px;background:#fff;border-radius:50%;box-shadow:0 1px 2px rgba(0,0,0,0.15)"></div>
<svg class="i" style="left:1503.30px;top:925.00px;width:28.80px;height:28.80px;" viewBox="0 0 24 24" fill="none" stroke="#2a8a92" stroke-width="1.4" stroke-linecap="round" stroke-linejoin="round"><path d="m14.74 9-.346 9m-4.788 0L9.26 9m9.968-3.21c.342.052.682.107 1.022.166m-1.022-.165L18.16 19.673a2.25 2.25 0 0 1-2.244 2.077H8.084a2.25 2.25 0 0 1-2.244-2.077L4.772 5.79m14.456 0a48.108 48.108 0 0 0-3.478-.397m-12 .562c.34-.059.68-.114 1.022-.165m0 0a48.11 48.11 0 0 1 3.478-.397m7.5 0v-.916c0-1.18-.91-2.164-2.09-2.201a51.964 51.964 0 0 0-3.32 0c-1.18.037-2.09 1.022-2.09 2.201v.916m7.5 0a48.667 48.667 0 0 0-7.5 0"/></svg>
<svg class="i" style="left:1570px;top:906px;width:24px;height:66px" viewBox="1570 0 24 66"><g fill="#5a6480"><circle cx="1581.2" cy="26.85" r="1.9"/><circle cx="1581.2" cy="33.3" r="1.9"/><circle cx="1581.2" cy="39.7" r="1.9"/></g></svg>
<div class="b" style="left:353px;top:972px;width:1264px;height:66px;background:#fff;border:1px solid #e3e8ef;border-radius:6px;box-shadow:0 1px 3px rgba(15,23,42,0.08),0 0 8px rgba(15,23,42,0.035)"></div>
<div class="t" style="left:377.8px;top:992.5px;font-size:20px;line-height:20px;font-weight:400;color:#111111;">Dining room - no occupancy</div>
<div class="t" style="left:867.8px;top:996.8px;font-size:15px;line-height:15px;font-weight:400;color:#94a3b8;">Apr 6, 2024</div>
<div class="t" style="left:990.2px;top:996.8px;font-size:15px;line-height:15px;font-weight:400;color:#94a3b8;">Apr 6, 2024</div>
<div class="t" style="left:1122.3px;top:996.8px;font-size:15px;line-height:15px;font-weight:400;color:#94a3b8;">-</div>
<div class="b" style="left:1274px;top:983px;width:103px;height:44px;background:#d8f4f4;border-radius:7px;box-shadow:0 1px 3px rgba(0,0,0,0.06)"></div>
<svg class="i" style="left:1294.30px;top:993.50px;width:23.40px;height:23.40px;" viewBox="0 0 24 24" fill="none" stroke="#134e5a" stroke-width="1.6" stroke-linecap="round" stroke-linejoin="round"><path d="M4.5 12a7.5 7.5 0 0 0 15 0m-15 0a7.5 7.5 0 1 1 15 0m-15 0H3m16.5 0H21m-1.5 0H12m-8.457 3.077 1.41-.513m14.095-5.13 1.41-.513M5.106 17.785l1.149-.964m11.49-9.642 1.149-.964M7.501 19.795l.75-1.3m7.5-12.99.75-1.3m-6.063 16.658.26-1.477m2.605-14.772.26-1.477m0 17.726-.26-1.477M10.698 4.614l-.26-1.477M16.5 19.794l-.75-1.299M7.5 4.205 12 12m6.894 5.785-1.149-.964M6.256 7.178l-1.15-.964m15.352 8.864-1.41-.513M4.954 9.435l-1.41-.514M12.002 12l-3.75 6.495"/></svg>
<div class="t" style="left:1327.3px;top:997.9px;font-size:16px;line-height:16px;font-weight:700;color:#134e5a;">Edit</div>
<div class="b" style="left:1415px;top:991px;width:51px;height:28px;background:#33a3a8;border-radius:14px"></div>
<div class="b" style="left:1441.5px;top:994px;width:23px;height:23px;background:#fff;border-radius:50%;box-shadow:0 1px 2px rgba(0,0,0,0.15)"></div>
<svg class="i" style="left:1503.30px;top:991.00px;width:28.80px;height:28.80px;" viewBox="0 0 24 24" fill="none" stroke="#2a8a92" stroke-width="1.4" stroke-linecap="round" stroke-linejoin="round"><path d="m14.74 9-.346 9m-4.788 0L9.26 9m9.968-3.21c.342.052.682.107 1.022.166m-1.022-.165L18.16 19.673a2.25 2.25 0 0 1-2.244 2.077H8.084a2.25 2.25 0 0 1-2.244-2.077L4.772 5.79m14.456 0a48.108 48.108 0 0 0-3.478-.397m-12 .562c.34-.059.68-.114 1.022-.165m0 0a48.11 48.11 0 0 1 3.478-.397m7.5 0v-.916c0-1.18-.91-2.164-2.09-2.201a51.964 51.964 0 0 0-3.32 0c-1.18.037-2.09 1.022-2.09 2.201v.916m7.5 0a48.667 48.667 0 0 0-7.5 0"/></svg>
<svg class="i" style="left:1570px;top:972px;width:24px;height:66px" viewBox="1570 0 24 66"><g fill="#5a6480"><circle cx="1581.2" cy="26.85" r="1.9"/><circle cx="1581.2" cy="33.3" r="1.9"/><circle cx="1581.2" cy="39.7" r="1.9"/></g></svg>
<div class="b" style="left:353px;top:1038px;width:1264px;height:66px;background:#fff;border:1px solid #e3e8ef;border-radius:6px;box-shadow:0 1px 3px rgba(15,23,42,0.08),0 0 8px rgba(15,23,42,0.035)"></div>
<div class="t" style="left:377.8px;top:1058.5px;font-size:20px;line-height:20px;font-weight:400;color:#111111;">Living room - no occupancy</div>
<div class="t" style="left:867.8px;top:1062.8px;font-size:15px;line-height:15px;font-weight:400;color:#94a3b8;">Apr 6, 2024</div>
<div class="t" style="left:990.2px;top:1062.8px;font-size:15px;line-height:15px;font-weight:400;color:#94a3b8;">Apr 6, 2024</div>
<div class="t" style="left:1122.3px;top:1062.8px;font-size:15px;line-height:15px;font-weight:400;color:#94a3b8;">-</div>
<div class="b" style="left:1274px;top:1049px;width:103px;height:44px;background:#d8f4f4;border-radius:7px;box-shadow:0 1px 3px rgba(0,0,0,0.06)"></div>
<svg class="i" style="left:1294.30px;top:1059.50px;width:23.40px;height:23.40px;" viewBox="0 0 24 24" fill="none" stroke="#134e5a" stroke-width="1.6" stroke-linecap="round" stroke-linejoin="round"><path d="M4.5 12a7.5 7.5 0 0 0 15 0m-15 0a7.5 7.5 0 1 1 15 0m-15 0H3m16.5 0H21m-1.5 0H12m-8.457 3.077 1.41-.513m14.095-5.13 1.41-.513M5.106 17.785l1.149-.964m11.49-9.642 1.149-.964M7.501 19.795l.75-1.3m7.5-12.99.75-1.3m-6.063 16.658.26-1.477m2.605-14.772.26-1.477m0 17.726-.26-1.477M10.698 4.614l-.26-1.477M16.5 19.794l-.75-1.299M7.5 4.205 12 12m6.894 5.785-1.149-.964M6.256 7.178l-1.15-.964m15.352 8.864-1.41-.513M4.954 9.435l-1.41-.514M12.002 12l-3.75 6.495"/></svg>
<div class="t" style="left:1327.3px;top:1063.9px;font-size:16px;line-height:16px;font-weight:700;color:#134e5a;">Edit</div>
<div class="b" style="left:1415px;top:1057px;width:51px;height:28px;background:#33a3a8;border-radius:14px"></div>
<div class="b" style="left:1441.5px;top:1060px;width:23px;height:23px;background:#fff;border-radius:50%;box-shadow:0 1px 2px rgba(0,0,0,0.15)"></div>
<svg class="i" style="left:1503.30px;top:1057.00px;width:28.80px;height:28.80px;" viewBox="0 0 24 24" fill="none" stroke="#2a8a92" stroke-width="1.4" stroke-linecap="round" stroke-linejoin="round"><path d="m14.74 9-.346 9m-4.788 0L9.26 9m9.968-3.21c.342.052.682.107 1.022.166m-1.022-.165L18.16 19.673a2.25 2.25 0 0 1-2.244 2.077H8.084a2.25 2.25 0 0 1-2.244-2.077L4.772 5.79m14.456 0a48.108 48.108 0 0 0-3.478-.397m-12 .562c.34-.059.68-.114 1.022-.165m0 0a48.11 48.11 0 0 1 3.478-.397m7.5 0v-.916c0-1.18-.91-2.164-2.09-2.201a51.964 51.964 0 0 0-3.32 0c-1.18.037-2.09 1.022-2.09 2.201v.916m7.5 0a48.667 48.667 0 0 0-7.5 0"/></svg>
<svg class="i" style="left:1570px;top:1038px;width:24px;height:66px" viewBox="1570 0 24 66"><g fill="#5a6480"><circle cx="1581.2" cy="26.85" r="1.9"/><circle cx="1581.2" cy="33.3" r="1.9"/><circle cx="1581.2" cy="39.7" r="1.9"/></g></svg>
<div class="b" style="left:353px;top:1104px;width:1264px;height:66px;background:#fff;border:1px solid #e3e8ef;border-radius:6px;box-shadow:0 1px 3px rgba(15,23,42,0.08),0 0 8px rgba(15,23,42,0.035)"></div>
<div class="t" style="left:377.8px;top:1124.5px;font-size:20px;line-height:20px;font-weight:400;color:#111111;">Workroom - no occupancy</div>
<div class="t" style="left:867.8px;top:1128.8px;font-size:15px;line-height:15px;font-weight:400;color:#94a3b8;">Apr 6, 2024</div>
<div class="t" style="left:990.2px;top:1128.8px;font-size:15px;line-height:15px;font-weight:400;color:#94a3b8;">Apr 6, 2024</div>
<div class="t" style="left:1122.3px;top:1128.8px;font-size:15px;line-height:15px;font-weight:400;color:#94a3b8;">-</div>
<div class="b" style="left:1274px;top:1115px;width:103px;height:44px;background:#d8f4f4;border-radius:7px;box-shadow:0 1px 3px rgba(0,0,0,0.06)"></div>
<svg class="i" style="left:1294.30px;top:1125.50px;width:23.40px;height:23.40px;" viewBox="0 0 24 24" fill="none" stroke="#134e5a" stroke-width="1.6" stroke-linecap="round" stroke-linejoin="round"><path d="M4.5 12a7.5 7.5 0 0 0 15 0m-15 0a7.5 7.5 0 1 1 15 0m-15 0H3m16.5 0H21m-1.5 0H12m-8.457 3.077 1.41-.513m14.095-5.13 1.41-.513M5.106 17.785l1.149-.964m11.49-9.642 1.149-.964M7.501 19.795l.75-1.3m7.5-12.99.75-1.3m-6.063 16.658.26-1.477m2.605-14.772.26-1.477m0 17.726-.26-1.477M10.698 4.614l-.26-1.477M16.5 19.794l-.75-1.299M7.5 4.205 12 12m6.894 5.785-1.149-.964M6.256 7.178l-1.15-.964m15.352 8.864-1.41-.513M4.954 9.435l-1.41-.514M12.002 12l-3.75 6.495"/></svg>
<div class="t" style="left:1327.3px;top:1129.9px;font-size:16px;line-height:16px;font-weight:700;color:#134e5a;">Edit</div>
<div class="b" style="left:1415px;top:1123px;width:51px;height:28px;background:#33a3a8;border-radius:14px"></div>
<div class="b" style="left:1441.5px;top:1126px;width:23px;height:23px;background:#fff;border-radius:50%;box-shadow:0 1px 2px rgba(0,0,0,0.15)"></div>
<svg class="i" style="left:1503.30px;top:1123.00px;width:28.80px;height:28.80px;" viewBox="0 0 24 24" fill="none" stroke="#2a8a92" stroke-width="1.4" stroke-linecap="round" stroke-linejoin="round"><path d="m14.74 9-.346 9m-4.788 0L9.26 9m9.968-3.21c.342.052.682.107 1.022.166m-1.022-.165L18.16 19.673a2.25 2.25 0 0 1-2.244 2.077H8.084a2.25 2.25 0 0 1-2.244-2.077L4.772 5.79m14.456 0a48.108 48.108 0 0 0-3.478-.397m-12 .562c.34-.059.68-.114 1.022-.165m0 0a48.11 48.11 0 0 1 3.478-.397m7.5 0v-.916c0-1.18-.91-2.164-2.09-2.201a51.964 51.964 0 0 0-3.32 0c-1.18.037-2.09 1.022-2.09 2.201v.916m7.5 0a48.667 48.667 0 0 0-7.5 0"/></svg>
<svg class="i" style="left:1570px;top:1104px;width:24px;height:66px" viewBox="1570 0 24 66"><g fill="#5a6480"><circle cx="1581.2" cy="26.85" r="1.9"/><circle cx="1581.2" cy="33.3" r="1.9"/><circle cx="1581.2" cy="39.7" r="1.9"/></g></svg>
<div class="b" style="left:353px;top:1170px;width:1264px;height:66px;background:#fff;border:1px solid #e3e8ef;border-radius:6px;box-shadow:0 1px 3px rgba(15,23,42,0.08),0 0 8px rgba(15,23,42,0.035)"></div>
<div class="t" style="left:377.8px;top:1190.5px;font-size:20px;line-height:20px;font-weight:400;color:#111111;">Wellness - no occupancy</div>
<div class="t" style="left:867.8px;top:1194.8px;font-size:15px;line-height:15px;font-weight:400;color:#94a3b8;">Apr 6, 2024</div>
<div class="t" style="left:990.2px;top:1194.8px;font-size:15px;line-height:15px;font-weight:400;color:#94a3b8;">Apr 6, 2024</div>
<div class="t" style="left:1122.3px;top:1194.8px;font-size:15px;line-height:15px;font-weight:400;color:#94a3b8;">-</div>
<div class="b" style="left:1274px;top:1181px;width:103px;height:44px;background:#d8f4f4;border-radius:7px;box-shadow:0 1px 3px rgba(0,0,0,0.06)"></div>
<svg class="i" style="left:1294.30px;top:1191.50px;width:23.40px;height:23.40px;" viewBox="0 0 24 24" fill="none" stroke="#134e5a" stroke-width="1.6" stroke-linecap="round" stroke-linejoin="round"><path d="M4.5 12a7.5 7.5 0 0 0 15 0m-15 0a7.5 7.5 0 1 1 15 0m-15 0H3m16.5 0H21m-1.5 0H12m-8.457 3.077 1.41-.513m14.095-5.13 1.41-.513M5.106 17.785l1.149-.964m11.49-9.642 1.149-.964M7.501 19.795l.75-1.3m7.5-12.99.75-1.3m-6.063 16.658.26-1.477m2.605-14.772.26-1.477m0 17.726-.26-1.477M10.698 4.614l-.26-1.477M16.5 19.794l-.75-1.299M7.5 4.205 12 12m6.894 5.785-1.149-.964M6.256 7.178l-1.15-.964m15.352 8.864-1.41-.513M4.954 9.435l-1.41-.514M12.002 12l-3.75 6.495"/></svg>
<div class="t" style="left:1327.3px;top:1195.9px;font-size:16px;line-height:16px;font-weight:700;color:#134e5a;">Edit</div>
<div class="b" style="left:1415px;top:1189px;width:51px;height:28px;background:#33a3a8;border-radius:14px"></div>
<div class="b" style="left:1441.5px;top:1192px;width:23px;height:23px;background:#fff;border-radius:50%;box-shadow:0 1px 2px rgba(0,0,0,0.15)"></div>
<svg class="i" style="left:1503.30px;top:1189.00px;width:28.80px;height:28.80px;" viewBox="0 0 24 24" fill="none" stroke="#2a8a92" stroke-width="1.4" stroke-linecap="round" stroke-linejoin="round"><path d="m14.74 9-.346 9m-4.788 0L9.26 9m9.968-3.21c.342.052.682.107 1.022.166m-1.022-.165L18.16 19.673a2.25 2.25 0 0 1-2.244 2.077H8.084a2.25 2.25 0 0 1-2.244-2.077L4.772 5.79m14.456 0a48.108 48.108 0 0 0-3.478-.397m-12 .562c.34-.059.68-.114 1.022-.165m0 0a48.11 48.11 0 0 1 3.478-.397m7.5 0v-.916c0-1.18-.91-2.164-2.09-2.201a51.964 51.964 0 0 0-3.32 0c-1.18.037-2.09 1.022-2.09 2.201v.916m7.5 0a48.667 48.667 0 0 0-7.5 0"/></svg>
<svg class="i" style="left:1570px;top:1170px;width:24px;height:66px" viewBox="1570 0 24 66"><g fill="#5a6480"><circle cx="1581.2" cy="26.85" r="1.9"/><circle cx="1581.2" cy="33.3" r="1.9"/><circle cx="1581.2" cy="39.7" r="1.9"/></g></svg>
<svg class="i" style="left:1570px;top:1125px;width:80px;height:70px" viewBox="1570 1125 80 70">
<ellipse cx="1608.4" cy="1158.6" rx="22.4" ry="19.6" fill="#2b8a92"/>
<path d="M1594 1170 C1594 1175 1592 1178 1591.3 1179.5 C1590.8 1180.8 1592 1181.2 1594 1180.8 C1598 1180.3 1601 1179 1604 1177 L1612 1177 Z" fill="#2b8a92"/>
<circle cx="1600" cy="1158.4" r="3" fill="#fff"/><circle cx="1608.3" cy="1158.4" r="3" fill="#fff"/><circle cx="1616.8" cy="1158.4" r="3" fill="#fff"/>
</svg>
</body></html>
